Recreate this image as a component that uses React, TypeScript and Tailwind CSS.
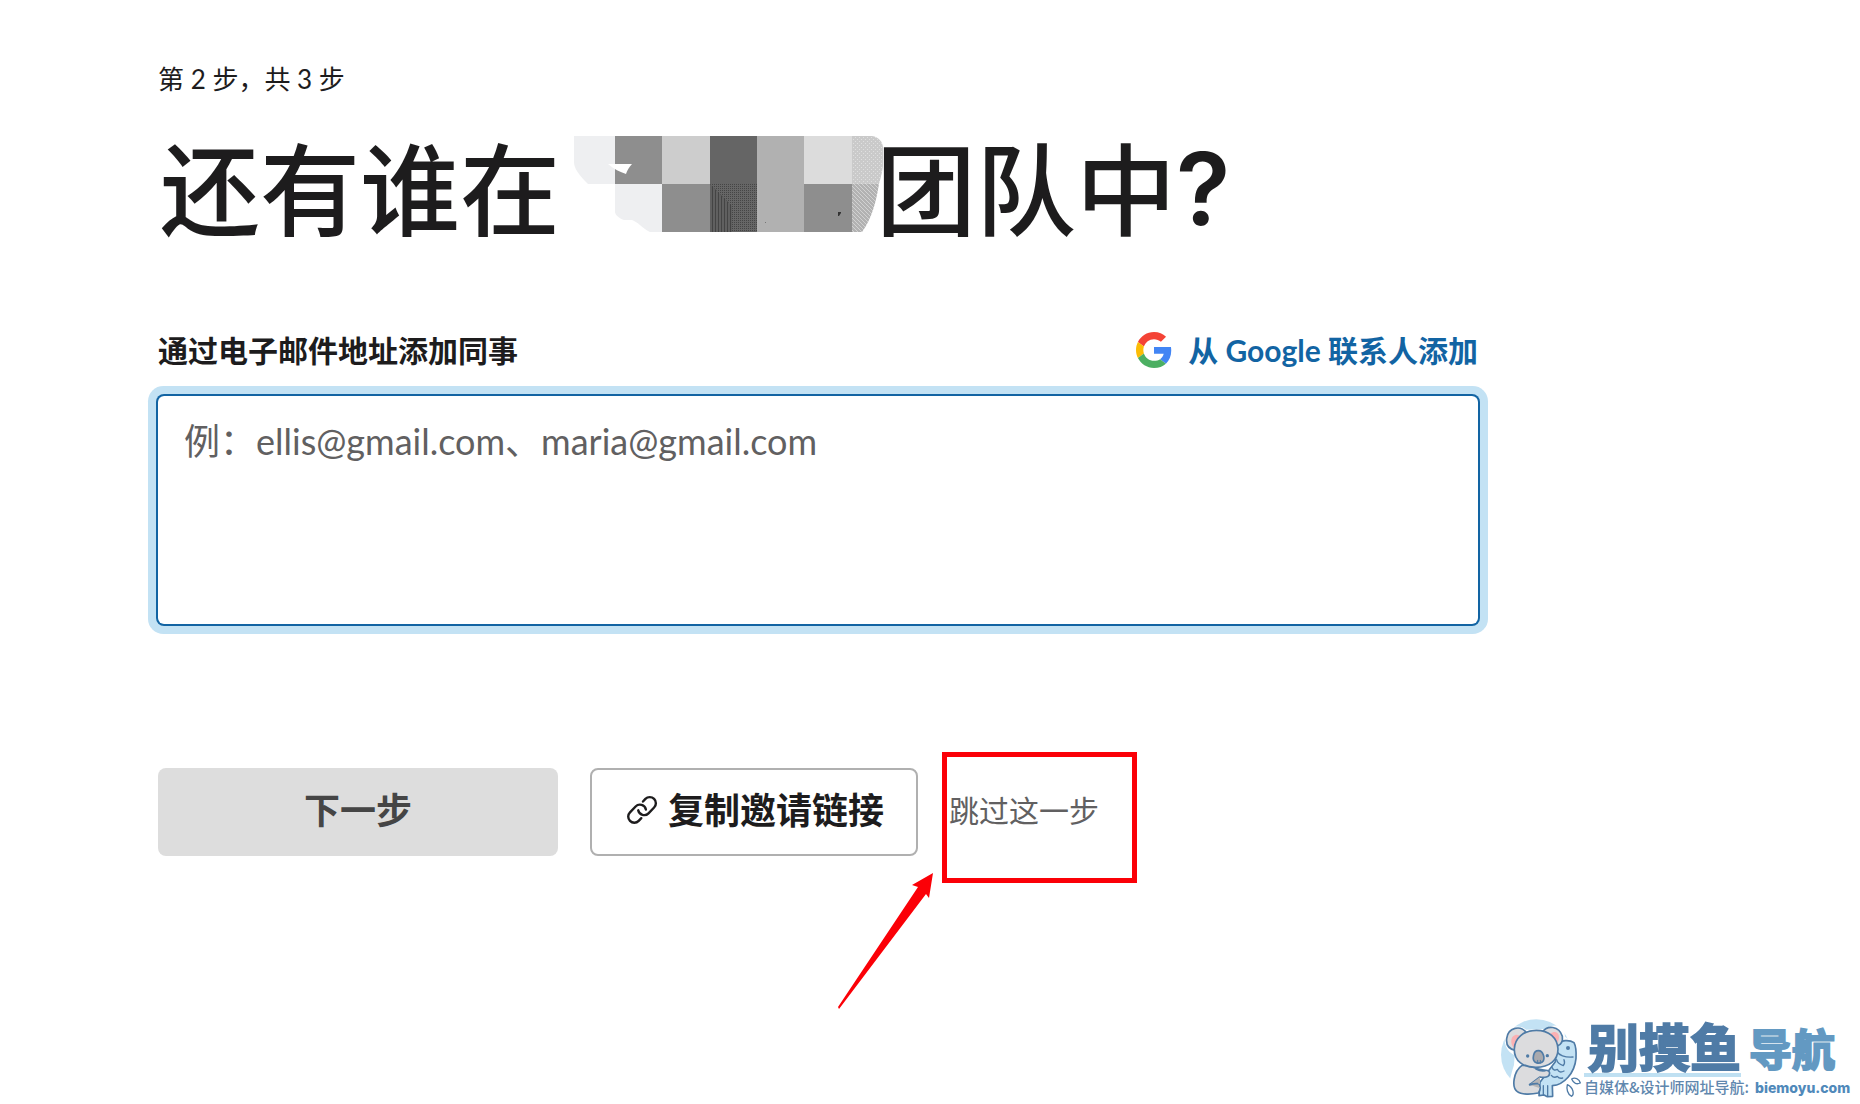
import React from "react";

const sans = "font-['Lato','Noto_Sans_CJK_SC',sans-serif]";

function RedactedName() {
  return (
    <svg
      className="mt-[7px] ml-3.5 -mr-2 h-24 w-[310px] shrink-0 self-start"
      viewBox="0 0 310 96"
      aria-hidden="true"
    >
      <defs>
        <pattern id="dots" width="4" height="4" patternUnits="userSpaceOnUse">
          <rect width="4" height="4" fill="#cacaca" />
          <rect x="1" y="1" width="1" height="1" fill="#e0e0e0" />
          <rect x="3" y="3" width="1" height="1" fill="#e0e0e0" />
        </pattern>
        <pattern id="weave" width="4" height="4" patternUnits="userSpaceOnUse">
          <rect width="4" height="4" fill="#b2b2b2" />
          <path d="M0 0h1v1h1v1h1v1h1v1h-1v-1h-1v-1h-1v-1h-1z" fill="#d2d2d2" />
        </pattern>
        <pattern id="check" width="2" height="2" patternUnits="userSpaceOnUse">
          <rect width="2" height="2" fill="#666" />
          <rect width="1" height="1" fill="#454545" />
        </pattern>
        <pattern id="bars" width="3" height="3" patternUnits="userSpaceOnUse">
          <rect width="3" height="3" fill="#606060" />
          <rect width="1" height="3" fill="#444" />
        </pattern>
      </defs>
      <path d="M0 0H41V48H14C4 38 0 32 0 26Z" fill="#eeeff1" />
      <path d="M41 48H88V96H76C68 92 64 86 58 84H50C44 82 41 78 41 76Z" fill="#eeeff1" />
      <path d="M41 0h47v48H41z" fill="#8e8e8e" />
      <path d="M88 0h48v48H88z" fill="#cdcdcd" />
      <path d="M136 0h47v48h-47z" fill="#656565" />
      <path d="M183 0h47v96h-47z" fill="#b1b1b1" />
      <path d="M230 0h48v48h-48z" fill="#dcdcdc" />
      <path d="M88 48h48v48H88z" fill="#8e8e8e" />
      <path d="M136 48h47v48h-47z" fill="url(#check)" />
      <path d="M136 48l22 22v26h-22z" fill="url(#bars)" />
      <path d="M230 48h48v48h-48z" fill="#8e8e8e" />
      <path d="M278 0H298C305 1 309 6 309 12V30C308 38 306 44 305 48H278Z" fill="url(#dots)" />
      <path d="M278 48H305C302 66 298 82 288 96H278Z" fill="url(#weave)" />
      <path d="M34 28H58C55 31 53 35 52 38C46 36 40 33 34 28Z" fill="#fff" />
      <path d="M264 76h3v1l-2 3h-1z" fill="#333" />
      <path d="M191 86h1v1h-1z" fill="#777" />
    </svg>
  );
}

function GoogleMark() {
  return (
    <svg className="size-9" viewBox="0 0 48 48" aria-hidden="true">
      <path fill="#f44336" d="M24 9.5c3.54 0 6.71 1.22 9.21 3.6l6.85-6.85C35.9 2.38 30.47 0 24 0 14.62 0 6.51 5.38 2.56 13.22l7.98 6.19C12.43 13.72 17.74 9.5 24 9.5z" />
      <path fill="#4285f4" d="M46.98 24.55c0-1.57-.15-3.09-.38-4.55H24v9.02h12.94c-.58 2.96-2.26 5.48-4.78 7.18l7.73 6c4.51-4.18 7.09-10.36 7.09-17.65z" />
      <path fill="#fbbc05" d="M10.53 28.59c-.48-1.45-.76-2.99-.76-4.59s.27-3.14.76-4.59l-7.98-6.19C.92 16.46 0 20.12 0 24c0 3.88.92 7.54 2.56 10.78l7.97-6.19z" />
      <path fill="#4caf62" d="M24 48c6.48 0 11.93-2.13 15.89-5.81l-7.73-6c-2.15 1.45-4.92 2.3-8.16 2.3-6.26 0-11.57-4.22-13.47-9.91l-7.98 6.19C6.51 42.62 14.62 48 24 48z" />
    </svg>
  );
}

function LinkIcon() {
  return (
    <svg
      className="h-8 w-8"
      viewBox="0 0 32 32"
      fill="none"
      stroke="#1d1c1d"
      strokeWidth="2.4"
      strokeLinecap="round"
      aria-hidden="true"
    >
      <path d="M17 7.5l2.4-2.6a6.1 6.1 0 0 1 8.7 0a6.1 6.1 0 0 1 0 8.6l-5.6 5.8a6.1 6.1 0 0 1-10.3-3" />
      <path d="M15.3 24.2l-2.6 2.7a6.1 6.1 0 0 1-8.7 0a6.1 6.1 0 0 1 0-8.6l5.6-5.8a6.1 6.1 0 0 1 10.3 3" />
    </svg>
  );
}

function Koala() {
  return (
    <svg
      className="h-[99px] w-[100px] shrink-0"
      viewBox="0 0 300 297"
      fill="none"
      stroke="#4f7ba6"
      strokeWidth="5"
      strokeLinecap="round"
      strokeLinejoin="round"
      aria-hidden="true"
    >
      <circle cx="139" cy="149" r="106" fill="#c3e2f4" stroke="none" />
      <path d="M72 180C40 280 60 290 110 290H250V240L190 244L250 190L262 120L225 95C225 65 200 50 165 72L108 74C90 58 46 60 44 104C44 130 62 146 74 150Z" fill="#fff" stroke="none" />
      <path d="M150 232L147 272L162 270L172 275L188 274L187 242C222 240 254 204 258 160C259 142 258 124 252 113C238 103 212 105 201 118L196 170Z" fill="#c3e2f4" />
      <path d="M160 242v28M173 242v30" strokeWidth="4" />
      <path d="M201 140C206 150 224 158 249 156" strokeWidth="4" />
      <circle cx="234" cy="129" r="6" fill="#4f7ba6" stroke="none" />
      <path d="M200 164q2 12 20 18q6-8 2-18M186 187q4 12 16 6q6 13 20 5M184 211q8 10 18 3q6 8 16 5" strokeWidth="4" />
      <path d="M76 136C54 132 48 118 50 101C54 65 93 61 108 82" fill="#dcdcde" />
      <path d="M158 80C171 61 207 61 217 94C219 108 212 119 202 123" fill="#dcdcde" />
      <path d="M73 130C63 122 60 104 69 94C77 86 87 89 91 94Z" fill="#fbb1b3" stroke="none" />
      <path d="M181 87C193 76 206 82 207 95C207 106 202 113 199 113Z" fill="#fbb1b3" stroke="none" />
      <path d="M96 181C70 199 64 248 82 260C94 270 126 268 145 264C154 252 151 241 144 236L119 239L150 216C164 219 177 216 178 208C181 200 174 195 165 196C145 193 127 187 112 181Z" fill="#dcdcde" />
      <path d="M119 239l31-23v20l-6 2 6 12z" fill="#b5b5b7" stroke="none" />
      <path d="M119 239q14-4 24-3M165 197q-14 2-27-5" />
      <path d="M139 76C101 76 74 99 73 132C72 167 99 187 138 187C178 187 204 166 204 132C202 98 177 76 139 76Z" fill="#dcdcde" />
      <circle cx="113" cy="153" r="5" fill="#4f7ba6" stroke="none" />
      <circle cx="172" cy="152" r="5" fill="#4f7ba6" stroke="none" />
      <path d="M145 137C129 137 126 164 135 171Q145 178 157 171C167 162 160 137 145 137Z" fill="#a9a9ad" />
      <path d="M143 166v9M151 166v8" strokeWidth="3" />
      <path d="M245 222C254 216 268 221 271 234C260 239 251 236 245 222ZM232 239C229 251 232 268 245 274C253 268 251 248 232 239Z" fill="#fff" strokeWidth="4" />
    </svg>
  );
}

function Watermark() {
  return (
    <aside className="absolute right-0 bottom-0 flex w-[370px] items-end font-['Noto_Sans_CJK_SC',sans-serif] whitespace-nowrap">
      <Koala />
      <div className="-ml-1.5 flex flex-col">
        <div className="flex items-end text-[#4f7ba6]">
          <span className="border-b-4 border-[#bfe0f2] pl-1 text-[51px] leading-[56px] font-bold [-webkit-text-stroke:2px_#4f7ba6] [stroke-linejoin:round]">
            别摸鱼
          </span>
          <span className="ml-2 pb-1.5 text-[43px] leading-[48px] font-bold text-[#6399c2] [-webkit-text-stroke:2px_#6399c2] [stroke-linejoin:round]">
            导航
          </span>
        </div>
        <div className="flex items-baseline pb-1.5 text-[#5f87ae]">
          <span className="text-[15px] leading-5 font-medium">自媒体&amp;设计师网址导航:</span>
          <span className="ml-1.5 font-['Inter','Noto_Sans_CJK_SC',sans-serif] text-sm leading-5 font-extrabold text-[#5089ba]">
            biemoyu.com
          </span>
        </div>
      </div>
    </aside>
  );
}

function Arrow() {
  return (
    <svg
      className="pointer-events-none absolute top-full right-full mr-3 -mt-1.5 h-[138px] w-[98px]"
      viewBox="0 0 98 138"
      aria-hidden="true"
    >
      <path d="M96 1L92 26L89 22L2 137L1 135L81 15L75 13Z" fill="#fb0007" />
    </svg>
  );
}

export default function App() {
  return (
    <div className={`relative flex min-h-screen flex-col bg-white text-[#1d1c1d] ${sans}`} lang="zh-CN">
      <main className="w-full max-w-[1636px] px-[158px] pt-[61px]">
        <p className="text-[26px] leading-9">第 2 步，共 3 步</p>
        <h1 className="mt-8 flex items-center pl-0.5 text-[100px] leading-[120px] font-medium whitespace-nowrap">
          还有谁在
          <RedactedName />
          团队中<span className="font-['Inter',sans-serif] font-semibold">?</span>
        </h1>

        <form className="mt-[79px]" onSubmit={(e) => e.preventDefault()}>
          <div className="flex items-center justify-between text-[30px] leading-[44px] font-bold">
            <label htmlFor="emails">通过电子邮件地址添加同事</label>
            <a href="#google" className="flex items-center gap-4 text-[#1264a3]">
              <GoogleMark />从 Google 联系人添加
            </a>
          </div>
          <textarea
            id="emails"
            placeholder="例：ellis@gmail.com、maria@gmail.com"
            className="mt-6 block h-[228px] w-full resize-none rounded-md px-[26px] py-5 text-4xl leading-[50px] shadow-[0_0_0_2px_#1264a3,0_0_0_10px_#c3e2f4] outline-none placeholder:text-[#616061]"
          />
          <div className="mt-32 flex items-start">
            <button
              type="submit"
              disabled
              className="mt-4 h-[88px] w-[400px] rounded-lg bg-[#ddd] pb-1 text-4xl font-bold text-[#454545]"
            >
              下一步
            </button>
            <button
              type="button"
              className="mt-4 ml-8 flex h-[88px] items-center gap-2.5 rounded-lg border-2 border-[#b0b0b0] pr-8 pb-1 pl-[34px] text-4xl font-bold"
            >
              <LinkIcon />
              复制邀请链接
            </button>
            <div className="relative ml-6 flex h-[131px] w-[195px] items-center border-[5px] border-[#fb0007] pb-4 pl-0.5">
              <button type="button" className="text-[30px] leading-10 text-[#616061]">
                跳过这一步
              </button>
              <Arrow />
            </div>
          </div>
        </form>
      </main>
      <Watermark />
    </div>
  );
}
